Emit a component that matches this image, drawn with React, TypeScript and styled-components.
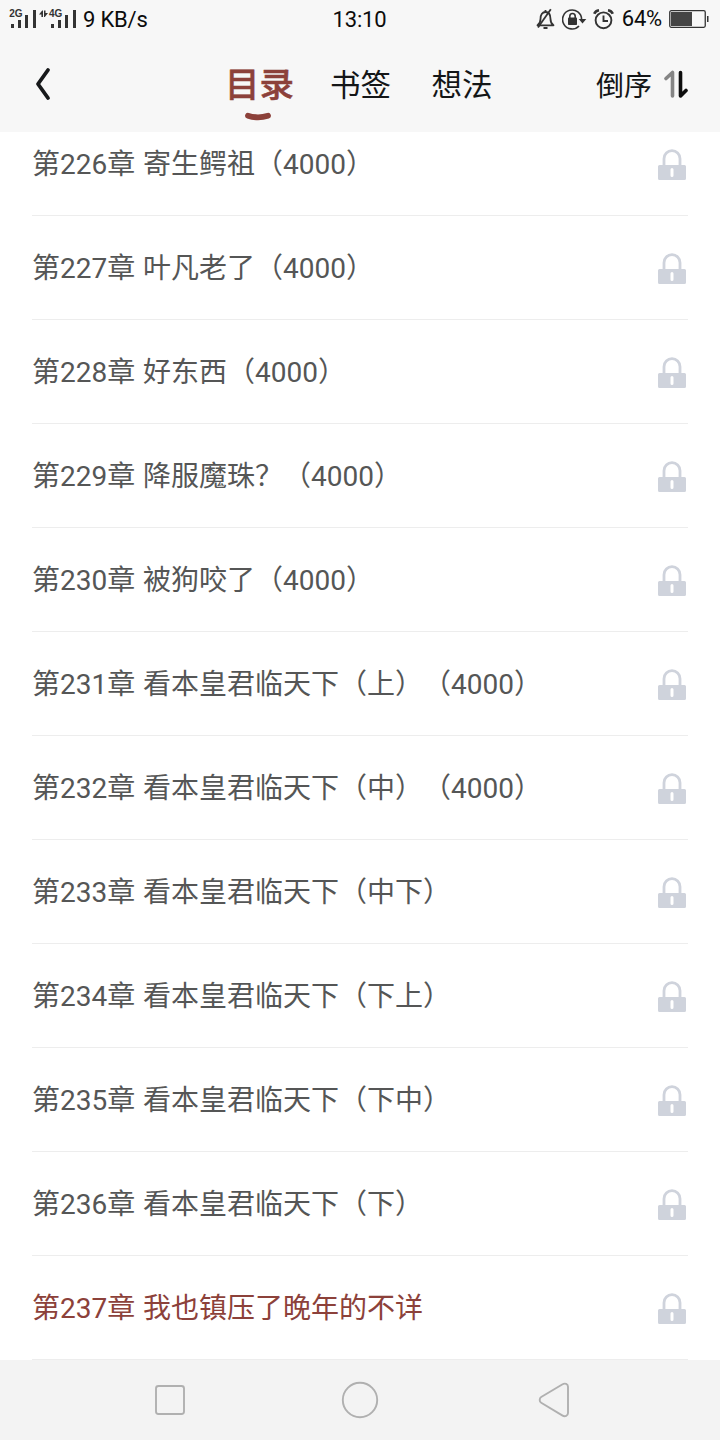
import React from "react";
import styled, { createGlobalStyle } from "styled-components";

const Global = createGlobalStyle`
  * { box-sizing: border-box; }
  body {
    margin: 0;
    background: #fff;
    font-family: Roboto, "Noto Sans CJK SC", sans-serif;
    text-spacing-trim: space-all;
  }
`;

const Screen = styled.div`
  width: 720px;
  height: 1440px;
  display: flex;
  flex-direction: column;
  overflow: hidden;
  background: #fff;
`;

const StatusBar = styled.div`
  height: 36px;
  flex: none;
  display: grid;
  grid-template-columns: 1fr auto 1fr;
  align-items: center;
  padding: 0 11px 0 8px;
  background: #f7f7f7;
  color: #0c0c0c;
  font-size: 22px;
  line-height: 36px;
`;

const StatusGroup = styled.div<{ $end?: boolean }>`
  display: flex;
  align-items: center;
  height: 36px;
  justify-content: ${(p) => (p.$end ? "flex-end" : "flex-start")};
  svg { flex: none; display: block; }
`;

const SystemIcons = styled.div`
  display: flex;
  gap: 6px;
`;

const StatusText = styled.span`
  padding-top: 2px;
  letter-spacing: -0.2px;
  white-space: nowrap;
`;

const Speed = styled(StatusText)`
  margin-left: 6px;
`;

const Clock = styled(StatusText)`
  padding-left: 2px;
`;

const Percent = styled(StatusText)`
  padding-top: 0;
  margin: 0 7px 0 8px;
`;

const Header = styled.header`
  height: 96px;
  flex: none;
  display: flex;
  align-items: flex-start;
  padding: 14px 32px 0;
  background: #f7f7f7;
  color: #141617;
`;

const BackButton = styled.button`
  width: 193px;
  height: 68px;
  padding: 0;
  border: 0;
  background: none;
  text-align: left;
  svg { display: block; }
`;

const Tabs = styled.nav`
  display: flex;
  gap: 40.5px;
  flex: 1;
`;

const Tab = styled.div<{ $active?: boolean }>`
  display: flex;
  flex-direction: column;
  align-items: center;
  line-height: 68px;
  height: 82px;
  padding-top: ${(p) => (p.$active ? 1 : 2)}px;
  font-size: ${(p) => (p.$active ? 34.5 : 30.5)}px;
  font-weight: ${(p) => (p.$active ? 500 : 400)};
  -webkit-text-stroke: ${(p) => (p.$active ? "0.5px #8c413a" : "0")};
  color: ${(p) => (p.$active ? "#8c413a" : "#141617")};
  margin-right: ${(p) => (p.$active ? -4.5 : 0)}px;
  svg { flex: none; margin: -7px 3px 0 0; }
`;

const SortButton = styled.div`
  display: flex;
  align-items: center;
  gap: 12px;
  height: 68px;
  font-size: 28px;
  line-height: 68px;
`;

const SortLabel = styled.span`
  padding-top: 6px;
`;

const ListViewport = styled.main`
  height: 1228px;
  flex: none;
  overflow: hidden;
  display: flex;
  flex-direction: column;
  justify-content: flex-end;
  padding: 0 32px;
`;

const Row = styled.div<{ $current?: boolean }>`
  height: 104px;
  flex: none;
  display: flex;
  align-items: center;
  justify-content: space-between;
  border-bottom: 1px solid #ededed;
  font-size: 28px;
  line-height: 40px;
  word-spacing: 0.8px;
  white-space: pre;
  color: ${(p) => (p.$current ? "#8c413a" : "#555656")};
  svg { margin: 2px 1px 0 0; display: block; }
`;

const Title = styled.span`
  padding-top: 2px;
`;

const NavBar = styled.footer`
  height: 80px;
  flex: none;
  display: flex;
  justify-content: space-between;
  align-items: center;
  padding: 0 150px;
  background: #f3f3f3;
`;

const chapters = [
  "第226章 寄生鳄祖（4000）",
  "第227章 叶凡老了（4000）",
  "第228章 好东西（4000）",
  "第229章 降服魔珠？（4000）",
  "第230章 被狗咬了（4000）",
  "第231章 看本皇君临天下（上）（4000）",
  "第232章 看本皇君临天下（中）（4000）",
  "第233章 看本皇君临天下（中下）",
  "第234章 看本皇君临天下（下上）",
  "第235章 看本皇君临天下（下中）",
  "第236章 看本皇君临天下（下）",
  "第237章 我也镇压了晚年的不详",
];

const SignalIcons = () => (
  <svg width="69" height="36" fill="#333">
    <g fontFamily="Liberation Sans, sans-serif" fontSize="10" fontWeight="700">
      <text x="1.2" y="16">2G</text>
      <text x="41" y="16">4G</text>
    </g>
    <path d="M3 23h3v4H3zM10 19h3v8h-3zM17 14h3v13h-3zM25 9h3v18h-3z" />
    <path d="M43 23h3v4h-3zM50 19h3v8h-3zM57 14h3v13h-3zM65 9h3v18h-3z" />
    <path d="M31 13.500l3.200-4H35V16h-1.600v-2.500zM36 9.500h1.500V12H40l-3.200 4H36z" />
  </svg>
);

const MuteIcon = () => (
  <svg width="20" height="22" viewBox="0 0 20 22" fill="none" stroke="#333" strokeWidth="1.8">
    <path d="M1.500 17.300c2.300-1.500 3-3.500 3-6.300C4.500 6.500 6.500 4 9.500 4s5 2.500 5 7c0 2.800.7 4.800 3 6.300z" strokeLinejoin="round" />
    <path d="M14.800 1.300L2 19.500" />
    <path d="M7.500 20h4M9.500 2v2" />
  </svg>
);

const RotationLockIcon = () => (
  <svg width="25" height="22" viewBox="0 0 25 22" fill="none" stroke="#333" strokeWidth="1.6">
    <path d="M19.600 11.500A9.500 9.500 0 1 0 17 18" />
    <path d="M16.700 11h7.600l-3.800 4.500z" fill="#333" stroke="none" />
    <rect x="6" y="9.500" width="9" height="7.500" rx=".8" fill="#333" stroke="none" />
    <path d="M7.800 10V8.200a2.700 2.700 0 0 1 5.400 0V10" />
  </svg>
);

const AlarmIcon = () => (
  <svg width="21" height="22" viewBox="0 0 21 22" fill="none" stroke="#333" strokeWidth="1.900">
    <circle cx="10.500" cy="12.300" r="7.900" />
    <path d="M10.500 7.500V13H15" />
    <path d="M1.200 5.800Q2.500 2.800 6 2.300M19.800 5.800Q18.500 2.800 15 2.300" strokeWidth="2.600" />
  </svg>
);

const BatteryIcon = () => (
  <svg width="40" height="20" viewBox="0 0 40 20">
    <rect x=".75" y="1.650" width="35.500" height="16.700" rx="1.500" fill="none" stroke="#333" strokeWidth="1.300" />
    <rect x="2" y="3" width="21" height="14" fill="#444" />
    <path d="M38 7h1.500v6H38z" fill="#333" />
  </svg>
);

const BackIcon = () => (
  <svg width="24" height="68" fill="none" stroke="#17191b" strokeWidth="3.800" strokeLinecap="round" strokeLinejoin="round">
    <path d="M16 20L6 34l10 14" />
  </svg>
);

const ActiveMark = () => (
  <svg width="28" height="10" viewBox="0 0 28 10" fill="none">
    <path d="M4 3.700Q14 6.900 24 3.700" stroke="#8c413a" strokeWidth="5.800" strokeLinecap="round" />
  </svg>
);

const SortIcon = () => (
  <svg width="24" height="28" viewBox="0 0 24 28" fill="none" strokeWidth="3.600" strokeLinecap="round" strokeLinejoin="round">
    <path d="M2 8.500L8.500 2.500V26" stroke="#858585" />
    <path d="M16.500 2.500V26L22 20.500" stroke="#0d0d0d" />
  </svg>
);

const LockIcon = () => (
  <svg width="30" height="32" viewBox="0 0 30 32">
    <path d="M7 17V9.700a8 8 0 0 1 16 0V17" fill="none" stroke="#cfd3dc" strokeWidth="2.800" />
    <path
      fillRule="evenodd"
      fill="#cfd3dc"
      d="M2.500 16h25q1.500 0 1.500 1.500v12q0 1.500-1.500 1.500h-25Q1 31 1 29.500v-12Q1 16 2.500 16zM15 19q-1.500 0-1.500 1.500v6a1.500 1.500 0 0 0 3 0v-6Q16.500 19 15 19z"
    />
  </svg>
);

const RecentIcon = () => (
  <svg width="40" height="40" fill="none" stroke="#b0b0b0" strokeWidth="1.900">
    <rect x="6" y="6" width="28" height="28" rx="2.500" />
  </svg>
);

const HomeIcon = () => (
  <svg width="40" height="40" fill="none" stroke="#b0b0b0" strokeWidth="1.900">
    <circle cx="20" cy="20" r="17.200" />
  </svg>
);

const NavBackIcon = () => (
  <svg width="40" height="40" fill="none" stroke="#b0b0b0" strokeWidth="1.900">
    <path d="M11.200 17L32.600 4.200C35 2.800 38 4.100 38 6.800V33c0 2.700-3 4-5.400 2.600L11.200 22.800c-2-1.200-2-4.600 0-5.800z" />
  </svg>
);

export default function App() {
  return (
    <Screen lang="zh-CN">
      <Global />
      <StatusBar>
        <StatusGroup>
          <SignalIcons />
          <Speed>9 KB/s</Speed>
        </StatusGroup>
        <Clock>13:10</Clock>
        <StatusGroup $end>
          <SystemIcons>
            <MuteIcon />
            <RotationLockIcon />
            <AlarmIcon />
          </SystemIcons>
          <Percent>64%</Percent>
          <BatteryIcon />
        </StatusGroup>
      </StatusBar>
      <Header>
        <BackButton aria-label="返回">
          <BackIcon />
        </BackButton>
        <Tabs>
          <Tab $active>
            目录
            <ActiveMark />
          </Tab>
          <Tab>书签</Tab>
          <Tab>想法</Tab>
        </Tabs>
        <SortButton>
          <SortLabel>倒序</SortLabel>
          <SortIcon />
        </SortButton>
      </Header>
      <ListViewport>
        {chapters.map((title, i) => (
          <Row key={title} $current={i === chapters.length - 1}>
            <Title>{title}</Title>
            <LockIcon />
          </Row>
        ))}
      </ListViewport>
      <NavBar>
        <RecentIcon />
        <HomeIcon />
        <NavBackIcon />
      </NavBar>
    </Screen>
  );
}
